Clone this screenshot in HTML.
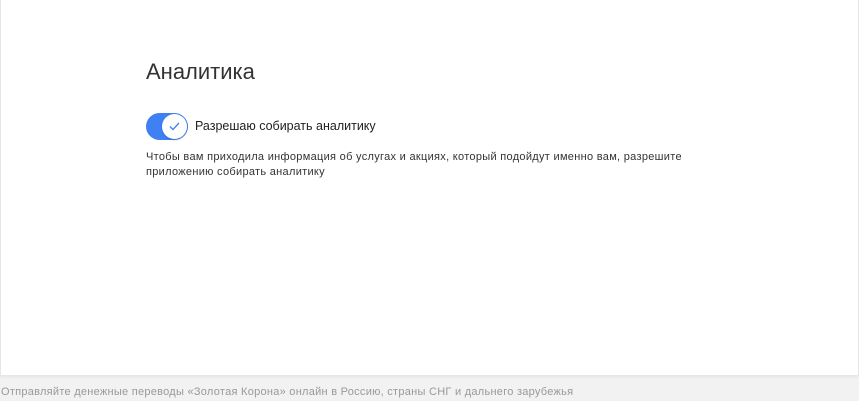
<!DOCTYPE html>
<html><head><meta charset="utf-8"><style>
html,body{margin:0;padding:0;width:859px;height:401px;overflow:hidden;background:#f2f2f2;font-family:"Liberation Sans","DejaVu Sans",sans-serif;}
.card{position:absolute;left:0;top:0;width:857px;height:375px;background:#fff;border:1px solid #e6e6e6;border-top:none;box-shadow:0 1px 3px rgba(0,0,0,0.06);}
h1{position:absolute;left:145px;top:59px;margin:0;font-size:22px;font-weight:normal;color:#333;letter-spacing:0;}
.tog{position:absolute;left:145px;top:113px;width:42px;height:27px;border-radius:14px;background:#3f80f4;}
.knob{position:absolute;right:1px;top:1px;width:25px;height:25px;border-radius:50%;background:#fff;box-shadow:0 1px 2px rgba(0,0,0,0.15);}
.knob svg{position:absolute;left:7px;top:8px;}
.lbl{position:absolute;left:194px;top:119px;font-size:12.5px;color:#222;}
.desc{position:absolute;left:145px;top:150px;font-size:11px;line-height:14.5px;color:#333;width:700px;letter-spacing:0.3px;}
.foot{position:absolute;left:1px;top:386px;font-size:11px;color:#999;letter-spacing:0.27px;}
</style></head><body>
<div class="card">
<h1>Аналитика</h1>
<div class="tog"><div class="knob"><svg width="11" height="9" viewBox="0 0 11 9"><path d="M1 4.5 L4 7.5 L10 1" fill="none" stroke="#3f80f4" stroke-width="1.3"/></svg></div></div>
<div class="lbl">Разрешаю собирать аналитику</div>
<div class="desc">Чтобы вам приходила информация об услугах и акциях, который подойдут именно вам, разрешите<br>приложению собирать аналитику</div>
</div>
<div class="foot">Отправляйте денежные переводы «Золотая Корона» онлайн в Россию, страны СНГ и дальнего зарубежья</div>
</body></html>
